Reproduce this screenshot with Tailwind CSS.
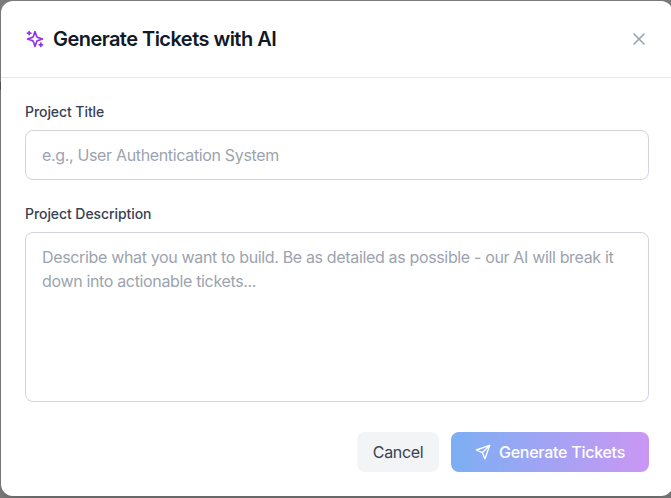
<!DOCTYPE html>
<html lang="en">
<head>
<meta charset="utf-8">
<title>Generate Tickets with AI</title>
<script src="https://cdn.jsdelivr.net/npm/@tailwindcss/browser@4"></script>
</head>
<body class="h-[498px] w-[671px] overflow-hidden bg-[#7a7a7a] pt-px pl-px font-['Inter','Liberation_Sans',sans-serif]">
<div class="absolute left-0 top-[82px] h-2 w-px bg-[#4b4e52]"></div>
<div class="w-[672px] h-[495px] rounded-xl bg-white shadow-xl">
  <header class="flex h-[77px] items-center justify-between border-b border-[#e5e7eb] px-6">
    <div class="flex items-center gap-2">
      <svg class="size-5 text-[#9333ea]" viewBox="0 0 24 24" fill="none" stroke="currentColor" stroke-width="2" stroke-linecap="round" stroke-linejoin="round"><path d="m12 3-1.912 5.813a2 2 0 0 1-1.275 1.275L3 12l5.813 1.912a2 2 0 0 1 1.275 1.275L12 21l1.912-5.813a2 2 0 0 1 1.275-1.275L21 12l-5.813-1.912a2 2 0 0 1-1.275-1.275L12 3Z"/><path d="M5 3v4"/><path d="M19 17v4"/><path d="M3 5h4"/><path d="M17 19h4"/></svg>
      <h2 class="whitespace-nowrap text-xl leading-7 font-semibold tracking-[-0.54px] text-[#111827]">Generate Tickets with AI</h2>
    </div>
    <button class="text-[#9ca3af]" aria-label="Close"><svg class="size-5" viewBox="0 0 24 24" fill="none" stroke="currentColor" stroke-width="2" stroke-linecap="round" stroke-linejoin="round"><path d="M18 6 6 18"/><path d="m6 6 12 12"/></svg></button>
  </header>
  <form class="p-6">
    <label for="title" class="mb-2 block text-sm leading-5 font-medium text-[#374151]"><span class="tracking-[-0.07px]">Project Title</span></label>
    <input id="title" class="block h-[50px] w-full rounded-lg border border-[#d1d5db] px-4 py-3 text-base leading-6 tracking-[-0.34px] placeholder:text-[#9ca3af]" placeholder="e.g., User Authentication System">
    <label for="description" class="mt-6 mb-2 block text-sm leading-5 font-medium text-[#374151]"><span class="tracking-[-0.07px]">Project Description</span></label>
    <textarea id="description" rows="6" class="block h-[170px] w-full resize-none rounded-lg border border-[#d1d5db] px-4 py-3 text-base leading-6 tracking-[-0.345px] placeholder:text-[#9ca3af]" placeholder="Describe what you want to build. Be as detailed as possible - our AI will break it down into actionable tickets..."></textarea>
    <div class="mt-[30px] flex justify-end gap-3">
      <button type="button" class="h-10 w-[82px] rounded-lg bg-[#f3f4f6] text-base leading-6 tracking-[-0.34px] text-[#374151]">Cancel</button>
      <button type="button" class="flex h-10 w-[198px] items-center gap-2 rounded-lg bg-linear-to-r/srgb from-[#7caff3] to-[#ca97f3] pl-6 text-base leading-6 font-medium tracking-[-0.26px] whitespace-nowrap text-white"><svg class="size-4 shrink-0" viewBox="0 0 24 24" fill="none" stroke="currentColor" stroke-width="2" stroke-linecap="round" stroke-linejoin="round"><path d="m22 2-7 20-4-9-9-4Z"/><path d="M22 2 11 13"/></svg>Generate Tickets</button>
    </div>
  </form>
</div>
</body>
</html>
